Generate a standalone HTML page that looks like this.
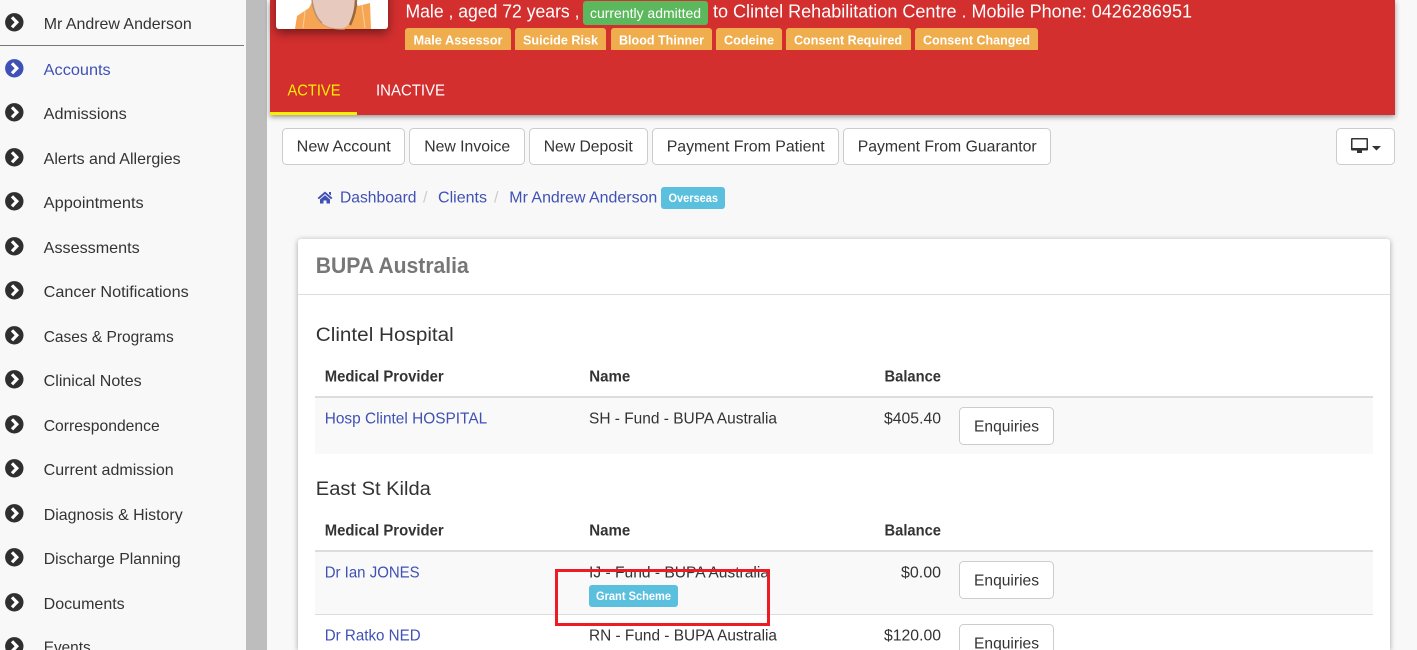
<!DOCTYPE html>
<html lang="en">
<head>
<meta charset="utf-8">
<title>BUPA Australia - Mr Andrew Anderson</title>
<style>
html,body{margin:0;padding:0;width:1417px;height:650px;overflow:hidden;background:#f8f8f8}
#page{position:relative;width:1417px;height:650px;overflow:hidden;background:#f8f8f8}
.box{position:absolute}
#side{left:0;top:0;width:246px;height:650px;background:#f8f8f8}
#strip{left:246px;top:0;width:21px;height:650px;background:#bdbdbd}
#head{left:270px;top:0;width:1125px;height:115px;background:#d32f2f;box-shadow:0 2px 5px rgba(0,0,0,.4)}
#photo{left:276px;top:-10px;width:112px;height:39px;background:#fff;border-radius:3px;box-shadow:0 4px 10px rgba(0,0,0,.45)}
#card{left:298px;top:239px;width:1092px;height:411px;background:#fff;border-radius:3px 3px 0 0;box-shadow:0 1px 6px rgba(0,0,0,.35)}
svg{position:absolute;left:0;top:0;overflow:hidden}
text{font-family:"Liberation Sans",sans-serif;font-size:16px;fill:#333}
.b{font-weight:700}
.l{fill:#3f51b5}
.w{fill:#fff}
.btn{fill:#fff;stroke:#ccc;stroke-width:1}
</style>
</head>
<body>
<div id="page">
<div class="box" id="side"></div>
<div class="box" id="strip"></div>
<div class="box" id="head"></div>
<div class="box" id="photo"></div>
<div class="box" id="card"></div>
<svg width="1417" height="650" viewBox="0 0 1417 650" xmlns="http://www.w3.org/2000/svg">
<defs>
<g id="ic"><circle cx="14.3" cy="0.3" r="9.2" /><polyline points="12,-4.7 16.8,0.3 12,5.3" fill="none" stroke="#fff" stroke-width="3.2"/></g>
</defs>

<!-- sidebar -->
<rect x="0" y="45" width="244" height="1" fill="#777"/>
<g fill="#2f2f2f">
<use href="#ic" y="22"/><use href="#ic" y="112"/><use href="#ic" y="157"/><use href="#ic" y="201"/><use href="#ic" y="246"/><use href="#ic" y="290"/><use href="#ic" y="335"/><use href="#ic" y="379"/><use href="#ic" y="424"/><use href="#ic" y="468"/><use href="#ic" y="513"/><use href="#ic" y="557"/><use href="#ic" y="602"/><use href="#ic" y="646"/>
</g>
<use href="#ic" y="68" fill="#3f51b5"/>
<text x="43.7" y="29" textLength="148" lengthAdjust="spacingAndGlyphs">Mr Andrew Anderson</text>
<text x="43.7" y="75" textLength="67" lengthAdjust="spacingAndGlyphs" class="l">Accounts</text>
<text x="43.7" y="119" textLength="83" lengthAdjust="spacingAndGlyphs">Admissions</text>
<text x="43.7" y="164" textLength="137" lengthAdjust="spacingAndGlyphs">Alerts and Allergies</text>
<text x="43.7" y="208" textLength="100" lengthAdjust="spacingAndGlyphs">Appointments</text>
<text x="43.7" y="253" textLength="96" lengthAdjust="spacingAndGlyphs">Assessments</text>
<text x="43.7" y="297" textLength="145" lengthAdjust="spacingAndGlyphs">Cancer Notifications</text>
<text x="43.7" y="342" textLength="130" lengthAdjust="spacingAndGlyphs">Cases &amp; Programs</text>
<text x="43.7" y="386" textLength="98" lengthAdjust="spacingAndGlyphs">Clinical Notes</text>
<text x="43.7" y="431" textLength="116" lengthAdjust="spacingAndGlyphs">Correspondence</text>
<text x="43.7" y="475" textLength="130" lengthAdjust="spacingAndGlyphs">Current admission</text>
<text x="43.7" y="520" textLength="139" lengthAdjust="spacingAndGlyphs">Diagnosis &amp; History</text>
<text x="43.7" y="564" textLength="137" lengthAdjust="spacingAndGlyphs">Discharge Planning</text>
<text x="43.7" y="609" textLength="81" lengthAdjust="spacingAndGlyphs">Documents</text>
<text x="43.7" y="652.5" textLength="47" lengthAdjust="spacingAndGlyphs">Events</text>

<!-- photo -->
<polygon points="295,29 297,16 309,8 313,0 355,0 358,6 370,3 371,29" fill="#f6a553"/>
<path d="M312,0 Q313,16 322,23 Q328,29 340,29 Q348,28 351,20 Q355,10 355,0 Z" fill="#e7cabd"/>
<path d="M312,0 Q314,16 322,23" fill="none" stroke="#a98468" stroke-width="1.5" opacity=".8"/>
<path d="M356,0 Q356,12 350,25" fill="none" stroke="#8a5a38" stroke-width="2.5" opacity=".85"/>
<path d="M322,24 Q330,30 345,29" fill="none" stroke="#d89a6a" stroke-width="1"/>
<path d="M305,11 L303,28" stroke="#fbcf9f" stroke-width="1" fill="none"/>
<path d="M362,5 L365,28" stroke="#fbcf9f" stroke-width="1" fill="none"/>
<rect x="276" y="29" width="112" height="2" fill="#d32f2f" opacity="0"/>

<!-- header text -->
<text x="405.5" y="17.7" style="font-size:18px" class="w" textLength="174" lengthAdjust="spacingAndGlyphs">Male , aged 72 years ,</text>
<rect x="583" y="1" width="125" height="24" rx="3" fill="#5cb85c"/>
<text x="590" y="18" style="font-size:14px" class="w" textLength="111" lengthAdjust="spacingAndGlyphs">currently admitted</text>
<text x="713" y="17.7" style="font-size:18px" class="w" textLength="479" lengthAdjust="spacingAndGlyphs">to Clintel Rehabilitation Centre . Mobile Phone: 0426286951</text>

<g fill="#f0ad4e">
<path d="M405,50V31a3,3 0 0 1 3-3H508a3,3 0 0 1 3,3V50Z"/>
<path d="M515,50V31a3,3 0 0 1 3-3H603a3,3 0 0 1 3,3V50Z"/>
<path d="M611,50V31a3,3 0 0 1 3-3H709a3,3 0 0 1 3,3V50Z"/>
<path d="M716,50V31a3,3 0 0 1 3-3H779a3,3 0 0 1 3,3V50Z"/>
<path d="M786,50V31a3,3 0 0 1 3-3H908a3,3 0 0 1 3,3V50Z"/>
<path d="M915,50V31a3,3 0 0 1 3-3H1035a3,3 0 0 1 3,3V50Z"/>
</g>
<text x="413.5" y="44.7" style="font-size:13px" class="w b" textLength="89" lengthAdjust="spacingAndGlyphs">Male Assessor</text>
<text x="523" y="44.7" style="font-size:13px" class="w b" textLength="75" lengthAdjust="spacingAndGlyphs">Suicide Risk</text>
<text x="619" y="44.7" style="font-size:13px" class="w b" textLength="85" lengthAdjust="spacingAndGlyphs">Blood Thinner</text>
<text x="724" y="44.7" style="font-size:13px" class="w b" textLength="50" lengthAdjust="spacingAndGlyphs">Codeine</text>
<text x="794" y="44.7" style="font-size:13px" class="w b" textLength="108" lengthAdjust="spacingAndGlyphs">Consent Required</text>
<text x="923" y="44.7" style="font-size:13px" class="w b" textLength="107" lengthAdjust="spacingAndGlyphs">Consent Changed</text>

<!-- tabs -->
<rect x="270" y="112" width="87" height="3" fill="#ffee00"/>
<text x="287.5" y="95.6" textLength="53" lengthAdjust="spacingAndGlyphs" style="fill:#ffee00">ACTIVE</text>
<text x="376" y="95.6" textLength="69" lengthAdjust="spacingAndGlyphs" class="w">INACTIVE</text>

<!-- toolbar -->
<rect class="btn" x="282.5" y="128.5" width="122" height="36" rx="4"/>
<rect class="btn" x="409.5" y="128.5" width="115" height="36" rx="4"/>
<rect class="btn" x="529.5" y="128.5" width="118" height="36" rx="4"/>
<rect class="btn" x="652.5" y="128.5" width="186" height="36" rx="4"/>
<rect class="btn" x="843.5" y="128.5" width="207" height="36" rx="4"/>
<rect class="btn" x="1336.5" y="128.5" width="58" height="36" rx="4"/>
<text x="296.7" y="151.6" textLength="94" lengthAdjust="spacingAndGlyphs">New Account</text>
<text x="424.2" y="151.6" textLength="86" lengthAdjust="spacingAndGlyphs">New Invoice</text>
<text x="543.7" y="151.6" textLength="89" lengthAdjust="spacingAndGlyphs">New Deposit</text>
<text x="666.7" y="151.6" textLength="158" lengthAdjust="spacingAndGlyphs">Payment From Patient</text>
<text x="857.7" y="151.6" textLength="179" lengthAdjust="spacingAndGlyphs">Payment From Guarantor</text>
<rect x="1351" y="138" width="17" height="12.5" rx="1" fill="#333"/>
<rect x="1352.5" y="139.5" width="14" height="8.5" fill="#fff"/>
<rect x="1357" y="150" width="5" height="3" fill="#333"/>
<polygon points="1372,146 1381,146 1376.5,150.5" fill="#333"/>

<!-- breadcrumb -->
<path d="M325,191.5 L332.5,198 L331,199.3 L325,194 L319,199.3 L317.5,198 Z M320,199.5 L325,195.2 L330,199.5 V203.5 H326.5 V200.5 H323.5 V203.5 H320 Z M329,192 H331 V195.5 L329,194 Z" fill="#3f51b5"/>
<text x="340" y="202.5" textLength="76.5" lengthAdjust="spacingAndGlyphs" class="l">Dashboard</text>
<text x="423" y="202.5" style="fill:#ccc">/</text>
<text x="438" y="202.5" textLength="49" lengthAdjust="spacingAndGlyphs" class="l">Clients</text>
<text x="494" y="202.5" style="fill:#ccc">/</text>
<text x="509.3" y="202.5" textLength="148" lengthAdjust="spacingAndGlyphs" class="l">Mr Andrew Anderson</text>
<rect x="661" y="187" width="64" height="22" rx="3" fill="#5bc0de"/>
<text x="668.5" y="202" style="font-size:12px" class="w b" textLength="49.5" lengthAdjust="spacingAndGlyphs">Overseas</text>

<!-- card -->
<rect x="298" y="294" width="1092" height="1" fill="#ddd"/>
<text x="315.8" y="273" style="font-size:22px;fill:#777" class="b" textLength="153" lengthAdjust="spacingAndGlyphs">BUPA Australia</text>

<text x="315.8" y="341" style="font-size:19px" textLength="138" lengthAdjust="spacingAndGlyphs">Clintel Hospital</text>
<text x="324.7" y="381.7" class="b" textLength="119" lengthAdjust="spacingAndGlyphs">Medical Provider</text>
<text x="589.3" y="381.7" class="b" textLength="41" lengthAdjust="spacingAndGlyphs">Name</text>
<text x="884.5" y="381.7" class="b" textLength="56.5" lengthAdjust="spacingAndGlyphs">Balance</text>
<rect x="315" y="398" width="1058" height="56" fill="#f9f9f9"/>
<rect x="315" y="396" width="1058" height="2" fill="#ddd"/>
<text x="324.7" y="423.5" class="l" textLength="162.5" lengthAdjust="spacingAndGlyphs">Hosp Clintel HOSPITAL</text>
<text x="589" y="423.5" textLength="188" lengthAdjust="spacingAndGlyphs">SH - Fund - BUPA Australia</text>
<text x="884" y="423.5" textLength="57" lengthAdjust="spacingAndGlyphs">$405.40</text>
<rect class="btn" x="959.5" y="407.5" width="94" height="37" rx="4"/>
<text x="974" y="431.6" textLength="65" lengthAdjust="spacingAndGlyphs">Enquiries</text>

<text x="315.8" y="495" style="font-size:19px" textLength="115" lengthAdjust="spacingAndGlyphs">East St Kilda</text>
<text x="324.7" y="535.5" class="b" textLength="119" lengthAdjust="spacingAndGlyphs">Medical Provider</text>
<text x="589.3" y="535.5" class="b" textLength="41" lengthAdjust="spacingAndGlyphs">Name</text>
<text x="884.5" y="535.5" class="b" textLength="56.5" lengthAdjust="spacingAndGlyphs">Balance</text>
<rect x="315" y="552" width="1058" height="62" fill="#f9f9f9"/>
<rect x="315" y="550" width="1058" height="2" fill="#ddd"/>
<rect x="315" y="614" width="1058" height="1" fill="#ddd"/>
<text x="324.7" y="577.5" class="l" textLength="95" lengthAdjust="spacingAndGlyphs">Dr Ian JONES</text>
<text x="589" y="577.5" textLength="180" lengthAdjust="spacingAndGlyphs">IJ - Fund - BUPA Australia</text>
<text x="901" y="577.5" textLength="40" lengthAdjust="spacingAndGlyphs">$0.00</text>
<rect class="btn" x="959.5" y="561.5" width="94" height="37" rx="4"/>
<text x="974" y="585.6" textLength="65" lengthAdjust="spacingAndGlyphs">Enquiries</text>
<rect x="589" y="585" width="89" height="22" rx="3" fill="#5bc0de"/>
<text x="596" y="600" style="font-size:12px" class="w b" textLength="75" lengthAdjust="spacingAndGlyphs">Grant Scheme</text>

<text x="324.7" y="640.5" class="l" textLength="96" lengthAdjust="spacingAndGlyphs">Dr Ratko NED</text>
<text x="589" y="640.5" textLength="188" lengthAdjust="spacingAndGlyphs">RN - Fund - BUPA Australia</text>
<text x="884" y="640.5" textLength="57" lengthAdjust="spacingAndGlyphs">$120.00</text>
<rect class="btn" x="959.5" y="624.5" width="94" height="37" rx="4"/>
<text x="974" y="648.6" textLength="65" lengthAdjust="spacingAndGlyphs">Enquiries</text>

<!-- annotation -->
<rect x="556.5" y="570.5" width="212" height="54" fill="none" stroke="#ed1c24" stroke-width="3"/>
</svg>
</div>
</body>
</html>
